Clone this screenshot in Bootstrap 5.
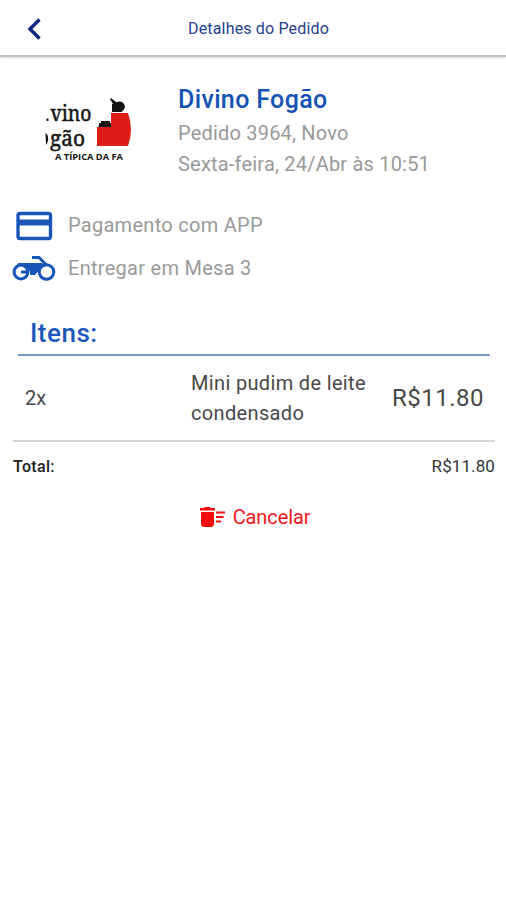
<!DOCTYPE html>
<html lang="pt-BR">
<head>
<meta charset="utf-8">
<meta name="viewport" content="width=device-width, initial-scale=1">
<title>Detalhes do Pedido</title>
<link href="https://cdn.jsdelivr.net/npm/bootstrap@5.3.0/dist/css/bootstrap.min.css" rel="stylesheet">
<style>
body{font-family:Roboto,"Liberation Sans",sans-serif;color:#484848;background:#fff}
svg{display:block;flex:none}
.topbar{height:57px;border-bottom:2px solid #c4c4c4;box-shadow:0 1px 2px rgba(0,0,0,.16);display:grid;grid-template-columns:1fr auto 1fr;padding:2px 11px 0 22px}
.topbar h1{font-size:16px;letter-spacing:.16px;color:#24408e;line-height:20px}
.shop{padding:28px 0 0 43px;height:147px}
.shop-info{padding-left:45px}
.shop-name{font-size:25px;line-height:30px;color:#1453b5;letter-spacing:.35px;padding-bottom:3px}
.muted-line{font-size:20px;line-height:31px;color:#999;letter-spacing:.2px;white-space:nowrap}
.info-row{height:43px;padding-left:12px;gap:12px}
.info-row .muted-line{letter-spacing:.28px}
.items-title{font-size:26px;line-height:34px;color:#1c57bb;letter-spacing:.5px;margin:26px 16px 0 18px;padding:0 0 4px 12px;border-bottom:2px solid #7c96d0}
.item-row{height:84px;padding:0 22px 0 25px;font-size:20px;line-height:30px}
.item-qty{width:166px}
.item-name{width:190px;letter-spacing:.34px}
.item-price{font-size:24px;letter-spacing:.48px}
.total-row{margin:0 11px 0 13px;border-top:2px solid #d4d4d4;height:52px;font-size:16px;letter-spacing:.3px;color:#222}
.total-row span:last-child{font-size:17px;letter-spacing:.1px;color:#333}
.btn-cancel{font-size:20px;line-height:30px;color:#f5141a;gap:8px;margin:4px 0 0 3px;letter-spacing:-.1px}
</style>
</head>
<body>
<header class="topbar align-items-center">
  <a href="#" aria-label="Voltar"><svg width="24" height="24" viewBox="0 0 24 24"><path d="M17.500 2.500 8 12l9.500 9.500" fill="none" stroke="#0c2481" stroke-width="3.400"/></svg></a>
  <h1 class="m-0 fw-normal">Detalhes do Pedido</h1>
</header>
<main>
  <section class="shop d-flex">
    <svg width="90" height="92" viewBox="43 85 90 92" role="img" aria-label="Divino Fogão">
      <g fill="#151515">
        <g font-family="Noto Serif,DejaVu Serif,serif" font-size="22" stroke="#151515" stroke-width=".5">
          <text x="50.500" y="121" textLength="41" lengthAdjust="spacingAndGlyphs">vino</text>
          <text x="50" y="145.500" textLength="35" lengthAdjust="spacingAndGlyphs">gão</text>
        </g>
        <path d="M46.500 118.500h2v2.500h-2zM45.500 133c3 1 4 8 .5 12z"/>
        <text x="55" y="160" font-family="Open Sans,sans-serif" font-size="8" font-weight="700" textLength="68" lengthAdjust="spacingAndGlyphs">A TÍPICA DA FA</text>
        <path d="M97 127h14v-14h17q6 17 0 33H97z" fill="#dc1d18"/>
        <path d="M99 126v-3h2v-2h9v2h1v4H98zM112 112v-8h1l-3-5 1-1 5 4h1q5-1.500 7 2 2 3-.500 6l-2 2z"/>
      </g>
    </svg>
    <div class="shop-info">
      <h2 class="shop-name fw-medium m-0">Divino Fogão</h2>
      <div class="muted-line">Pedido 3964, Novo</div>
      <div class="muted-line">Sexta-feira, 24/Abr às 10:51</div>
    </div>
  </section>
  <section>
    <div class="info-row d-flex align-items-center">
      <svg width="44" height="40" viewBox="12 205 44 40"><rect x="18" y="212.500" width="32.500" height="25" rx="2" fill="none" stroke="#1855b9" stroke-width="3.300"/><path d="M17 218.500h34v6H17z" fill="#1855b9"/></svg>
      <span class="muted-line">Pagamento com APP</span>
    </div>
    <div class="info-row d-flex align-items-center">
      <svg width="44" height="40" viewBox="12 248 44 40"><g fill="none" stroke="#1855b9" stroke-width="3"><circle cx="21" cy="271" r="6.900"/><circle cx="46.500" cy="271" r="7.300"/><path d="M32 256.500h7l8 8M21 271h6"/></g><path d="M18 262h24l3 3-4 2-6 7h-5c1-6-4-10-12-9z" fill="#1855b9"/></svg>
      <span class="muted-line">Entregar em Mesa 3</span>
    </div>
  </section>
  <section>
    <h3 class="items-title fw-medium">Itens:</h3>
    <div class="item-row d-flex align-items-center">
      <span class="item-qty">2x</span>
      <span class="item-name">Mini pudim de leite condensado</span>
      <span class="item-price ms-auto">R$11.80</span>
    </div>
    <div class="total-row d-flex align-items-center justify-content-between">
      <span class="fw-medium">Total:</span><span>R$11.80</span>
    </div>
  </section>
  <div class="d-flex justify-content-center">
    <button type="button" class="btn btn-cancel d-inline-flex align-items-center border-0">
      <svg width="26" height="22" viewBox="199 506 26 22" fill="#f80c0c"><path d="M200 508h4l1-1h5l1 1h4v2.500h-15zM201 512h13v13l-2 2h-9l-2-2zM216 511.500h9v2h-9zM216 516h7.500v2H216zM216 520.500h5v2h-5z"/></svg>
      Cancelar
    </button>
  </div>
</main>
<script src="https://cdn.jsdelivr.net/npm/bootstrap@5.3.0/dist/js/bootstrap.bundle.min.js"></script>
</body>
</html>
